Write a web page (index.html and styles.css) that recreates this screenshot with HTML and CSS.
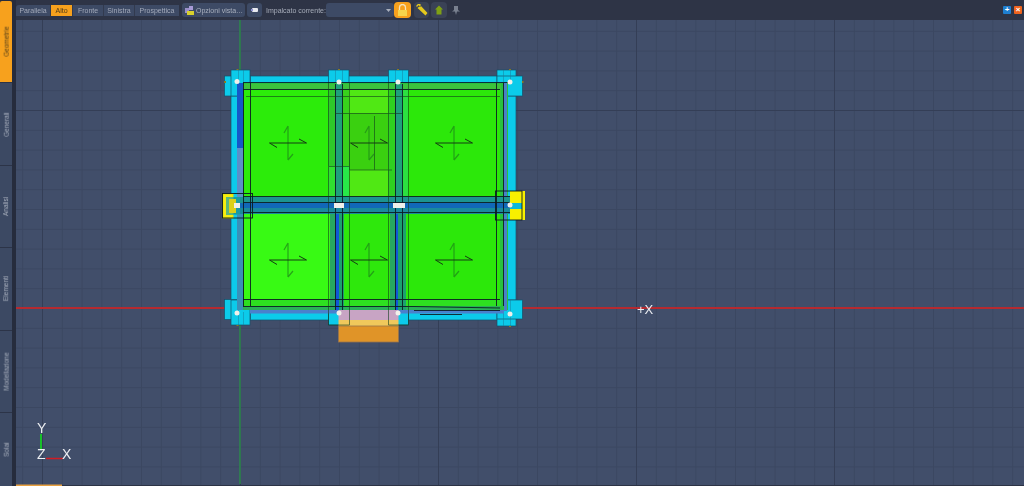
FILE: index.html
```html
<!DOCTYPE html>
<html lang="it">
<head>
<meta charset="utf-8">
<title>Vista Alto</title>
<link rel="stylesheet" href="styles.css">
</head>
<body>
<div class="app">
  <aside class="side">
    <div class="stab on"><span>Geometrie</span></div>
    <div class="stab"><span>Generali</span></div>
    <div class="stab"><span>Analisi</span></div>
    <div class="stab"><span>Elementi</span></div>
    <div class="stab"><span>Modellazione</span></div>
    <div class="stab last"><span>Solai</span></div>
  </aside>
  <main class="work">
    <header class="bar">
      <nav class="views">
        <span class="vt w1">Parallela</span><span class="vt w2 on">Alto</span><span class="vt w3">Fronte</span><span class="vt w4">Sinistra</span><span class="vt w5">Prospettica</span>
      </nav>
      <button class="btn opts">
        <svg width="11" height="11" viewBox="0 0 11 11"><rect x="1" y="3" width="4" height="5" fill="#9a8fc8"/><rect x="5" y="1" width="4" height="4" fill="#a79ad6"/><rect x="3" y="6" width="7" height="4" fill="#d8d02c"/></svg>
        <span class="soft">Opzioni vista…</span>
      </button>
      <button class="btn cam">
        <svg width="8" height="8" viewBox="0 0 8 8"><rect x="1" y="2" width="6" height="4" rx="1" fill="#e8eaf0"/><rect x="0" y="3" width="2" height="2" fill="#8f8fd0"/></svg>
      </button>
      <label class="lbl">Impalcato corrente:</label>
      <div class="combo"><svg width="5" height="3" viewBox="0 0 5 3"><path d="M0 0h5L2.500 3z" fill="#aab0bd"/></svg></div>
      <button class="ib lock">
        <svg width="11" height="13" viewBox="0 0 11 13"><path d="M2.500 6V3.500a3 3 0 0 1 6 0V6" fill="none" stroke="#f4e4c0" stroke-width="1.300"/><rect x="1" y="6" width="9" height="6" fill="#f6d44c"/></svg>
      </button>
      <button class="ib wrench">
        <svg width="12" height="12" viewBox="0 0 12 12"><path d="M.8 3 3 1l.6 2 1-.2.2-2.300C3.500-.5 1.500-.3.800 1 .2 1.800.2 2.500.8 3zM1.500 4 4.500 1.500 11.500 9 9.500 11.500z" fill="#e4c81c"/></svg>
      </button>
      <button class="ib home">
        <svg width="10" height="10" viewBox="0 0 10 10"><path d="M5 .5 9 4.500H7.500V9.500H2.500V4.500H1z" fill="#7fa014"/></svg>
      </button>
      <span class="pin">
        <svg width="8" height="9" viewBox="0 0 8 9"><path d="M2 0h4v4l2 1.500H5L4 9 3 5.500H0L2 4z" fill="#79808f"/></svg>
      </span>
      <div class="win">
        <span class="wb plus">+</span><span class="wb close">×</span>
      </div>
    </header>
    <section class="canvas">
      <svg class="scene" viewBox="16 20 1008 466" width="1008" height="466">
        <defs>
          <pattern id="minor" x="42" y="110" width="19.8" height="19.8" patternUnits="userSpaceOnUse">
            <path d="M.5 0V19.800M0 .5H19.800" fill="none" stroke="#3b4761" stroke-width="1"/>
          </pattern>
          <g id="arrow">
            <path d="M0-17V17M0-17-4-10M0 17 5 11" fill="none" stroke="#1f8a1a" stroke-width="1.200" opacity=".75"/>
            <path d="M-18.500 0H18.500M-18.500 0-11 4.500M18.500 0 11-4" fill="none" stroke="#143c12" stroke-width="1"/>
          </g>
        </defs>
        <rect x="16" y="20" width="1008" height="466" fill="url(#minor)"/>
        <path d="M42.500 20V486M240.500 20V486M438.500 20V486M636.500 20V486M834.500 20V486M16 110.500H1024" fill="none" stroke="#343e56" stroke-width="1"/>
        <path d="M240 20V484" stroke="#2c8a4e" stroke-width="1.500"/>
        <path d="M16 308H1024" stroke="#b52a30" stroke-width="2"/>
        <rect x="16" y="485" width="1008" height="1" fill="#2c3345"/>

        <!-- cyan frame -->
        <g fill="#0ccbea" stroke="#14506a" stroke-width=".7">
          <rect x="231" y="76" width="285" height="244"/>
          <rect x="224.500" y="76" width="26" height="20"/>
          <rect x="231" y="70" width="19" height="26"/>
          <rect x="328.500" y="70" width="20.500" height="13"/>
          <rect x="388.500" y="70" width="20" height="13"/>
          <rect x="497" y="70" width="19" height="26"/>
          <rect x="497" y="76" width="25.500" height="20"/>
          <rect x="224.500" y="299.500" width="26" height="20"/>
          <rect x="231" y="300" width="19" height="25"/>
          <rect x="328.500" y="312" width="20" height="13"/>
          <rect x="388.500" y="312" width="20" height="13"/>
          <rect x="497" y="300" width="19" height="26"/>
          <rect x="497" y="300" width="25.500" height="19"/>
        </g>
        <g fill="none" stroke="#1a7a9a" stroke-width=".6" opacity=".8">
          <path d="M238.500 70V96M243.500 70V83M335.500 70V83M342.500 70V83M395.500 70V83M402.500 70V83M503.500 70V83M510.500 70V83"/>
          <path d="M238.500 300V325M243.500 312V325M503.500 300V326M510.500 300V326"/>
        </g>

        <!-- floor field -->
        <rect x="238" y="83" width="270" height="227" fill="#28c040"/>
        <rect x="237" y="83" width="6" height="65" fill="#1558c8"/>
        <rect x="237" y="148" width="6" height="50" fill="#5c90c8"/>
        <rect x="237" y="214" width="6" height="96" fill="#3a90b8"/>
        <rect x="504" y="83" width="3" height="228" fill="#4a80c8"/>
        <rect x="243" y="84" width="258" height="13" fill="#3cc23c"/>
        <rect x="243" y="299" width="258" height="7" fill="#2ee020"/>
        <rect x="243" y="306" width="258" height="4" fill="#2ab058"/>

        <!-- slabs -->
        <rect x="244" y="90" width="84" height="108" fill="#2cec0a"/>
        <rect x="349" y="90" width="45" height="108" fill="#50e814"/>
        <rect x="349" y="113" width="43" height="57" fill="#3ad010"/>
        <rect x="408" y="90" width="92" height="108" fill="#2ce80a"/>
        <rect x="244" y="214" width="86" height="85" fill="#38fa14"/>
        <rect x="344" y="214" width="46" height="85" fill="#2ee80c"/>
        <rect x="406" y="214" width="94" height="85" fill="#2ce80a"/>

        <!-- vertical beams, upper half -->
        <rect x="328" y="90" width="7" height="76" fill="#2ec82a"/>
        <rect x="342" y="90" width="7" height="76" fill="#38d21c"/>
        <rect x="328" y="166" width="7" height="31" fill="#30e030"/>
        <rect x="342" y="166" width="7" height="31" fill="#28e848"/>
        <rect x="335" y="84" width="7" height="113" fill="#1fa07c"/>
        <rect x="388" y="90" width="7" height="107" fill="#2fd020"/>
        <rect x="402" y="90" width="6" height="107" fill="#2ce040"/>
        <rect x="395" y="84" width="7" height="113" fill="#1fa07c"/>

        <!-- vertical beams, lower half -->
        <rect x="330" y="213" width="5" height="97" fill="#27a860"/>
        <rect x="335" y="213" width="4" height="97" fill="#1058d8"/>
        <rect x="339" y="213" width="5" height="97" fill="#1ca070"/>
        <rect x="390" y="213" width="5" height="97" fill="#27a860"/>
        <rect x="395" y="213" width="3" height="97" fill="#1058d8"/>
        <rect x="398" y="213" width="8" height="97" fill="#1ca070"/>

        <!-- centre beam -->
        <rect x="231" y="197" width="279" height="6" fill="#1c9490"/>
        <rect x="231" y="203" width="279" height="5" fill="#1168b8"/>
        <rect x="231" y="208" width="279" height="6" fill="#1a8a9c"/>

        <!-- lower band -->
        <rect x="250" y="310" width="254" height="3.500" fill="#4a80cc"/>
        <rect x="338.500" y="310" width="60" height="10" fill="#c8a4c4"/>
        <rect x="338.500" y="320" width="60" height="6" fill="#f0c85c"/>
        <rect x="338.500" y="326" width="60" height="16" fill="#e09428" stroke="#98744c" stroke-width=".8"/>

        <!-- yellow ends -->
        <rect x="223" y="194" width="10" height="24" fill="#f6ee10" stroke="#e8e000"/>
        <rect x="226" y="197" width="14" height="18" fill="#1aa0a8" opacity=".7"/>
        <rect x="229" y="199" width="7" height="14" fill="#dcd018"/>
        <rect x="510" y="191" width="15" height="29" fill="#f8f000"/>
        <rect x="510" y="203" width="12" height="6" fill="#10b8d8"/>

        <!-- outline drawing: strong edges -->
        <g fill="none" stroke="#0c1c22" stroke-width=".9">
          <path d="M243 82.500H510M243 89.500H500"/>
          <path d="M243 196.500H510M243 202.500H510M243 212.500H510"/>
          <path d="M243 299.500H500M243 306.500H414L500 308M414 310.500H500M420 314.500H462"/>
          <path d="M243.500 83V306M250.500 83V306"/>
          <path d="M335.500 84V310M342.500 84V310"/>
          <path d="M395.500 84V310M402.500 84V310"/>
          <path d="M496.500 83V306M503.500 83V306"/>
          <rect x="222.500" y="193.500" width="30" height="24.500"/>
          <rect x="495.500" y="191" width="26.500" height="29"/>
        </g>
        <!-- outline drawing: faint edges -->
        <g fill="none" stroke="#123c1c" stroke-width=".8" opacity=".75">
          <path d="M246 96.500H500"/>
          <path d="M328.500 83V312M349.500 83V312M388.500 83V312M408.500 83V312"/>
          <path d="M329 166.500H349M335 113.500H402M349.500 113V170H392M374.500 116V170"/>
          <path d="M328.500 312V325H349.500V312M388.500 312V325H408.500V312"/>
        </g>

        <!-- nodes -->
        <g fill="#f0f0ea">
          <circle cx="237" cy="81.500" r="2.500"/><circle cx="339" cy="82" r="2.500"/><circle cx="398" cy="82" r="2.500"/><circle cx="510" cy="82" r="2.500"/>
          <rect x="234" y="203" width="6" height="5"/><rect x="334" y="203" width="10" height="5"/><rect x="393" y="203" width="12" height="5"/><circle cx="510" cy="205" r="2.500"/>
          <circle cx="237" cy="313" r="2.500"/><circle cx="339" cy="313" r="2.500"/><circle cx="398" cy="313" r="2.500"/><circle cx="510" cy="314" r="2.500"/>
        </g>
        <g fill="#8a7a20">
          <rect x="236.500" y="69" width="2" height="1"/><rect x="338" y="69" width="2" height="1"/><rect x="397" y="69" width="2" height="1"/><rect x="509" y="69" width="2" height="1"/>
          <rect x="224" y="81" width="2" height="2"/><rect x="522" y="81" width="1.500" height="2"/><rect x="236.500" y="325" width="2" height="1"/><rect x="509" y="326" width="2" height="1"/>
        </g>

        <!-- slab direction marks -->
        <use href="#arrow" x="288" y="143"/>
        <use href="#arrow" x="369" y="143"/>
        <use href="#arrow" x="454" y="143"/>
        <use href="#arrow" x="288" y="260"/>
        <use href="#arrow" x="369" y="260"/>
        <use href="#arrow" x="454" y="260"/>

        <text class="axis small" x="637" y="314">+X</text>

        <!-- triad -->
        <path d="M41 434V449" stroke="#18c02a" stroke-width="2"/>
        <path d="M46 458.500H63" stroke="#d01c24" stroke-width="1.500"/>
        <text class="axis" x="37" y="433">Y</text>
        <text class="axis" x="37" y="459">Z</text>
        <text class="axis" x="62" y="459">X</text>
        <rect x="16" y="484.500" width="46" height="1.500" fill="#e8a040"/>
      </svg>
    </section>
  </main>
</div>
</body>
</html>
```
FILE: styles.css
```css
* { box-sizing: border-box; }
html, body { margin: 0; height: 100%; }
body { background: #2b3142; font-family: "Liberation Sans", Arial, sans-serif; overflow: hidden; }
.app { display: flex; width: 1024px; height: 486px; }

.side { width: 16px; flex: none; display: flex; flex-direction: column; padding: 1px 4px 0 0; background: #262c3d; }
.stab { height: 82.400px; flex: none; display: flex; align-items: center; justify-content: center; background: #3c4963; border-bottom: 1px solid #2c3448; color: #a8afbd; font-size: 6.500px; overflow: hidden; }
.stab.last { flex: 1; border-bottom: 0; }
.stab span { transform: rotate(-90deg); white-space: nowrap; display: block; filter: blur(.3px); }
.stab.on { background: #f7a11d; color: #4c3a1a; border-radius: 2px 2px 0 0; }

.work { flex: 1; display: flex; flex-direction: column; min-width: 0; }
.bar { height: 20px; flex: none; display: flex; align-items: center; background: #2e3446; padding-right: 2px; color: #a6acb9; font-size: 7px; }
.views { display: flex; align-self: flex-start; margin-top: 5px; height: 11px; width: 163px; flex: none; }
.vt { display: flex; align-items: center; justify-content: center; background: #3d4a65; color: #a3aaba; border-right: 1px solid #323a4e; filter: blur(.25px); }
.vt.w1 { width: 35px; border-radius: 3px 0 0 0; }
.vt.w2 { width: 22px; }
.vt.w3 { width: 31px; }
.vt.w4 { width: 31px; }
.vt.w5 { width: 44px; border-right: 0; }
.vt.on { background: #f7a11d; color: #4c3a1a; }

button { border: 0; padding: 0; margin: 0; font: inherit; color: inherit; display: flex; align-items: center; justify-content: center; }
.btn { background: #3d4a65; border-radius: 3px; height: 14px; }
.opts { width: 63px; margin-left: 3px; gap: 1px; color: #a9b0be; white-space: nowrap; overflow: hidden; }
.soft { filter: blur(.25px); }
.cam { width: 15px; margin-left: 2px; }
.lbl { margin-left: 4px; width: 60px; white-space: nowrap; flex: none; filter: blur(.25px); }
.combo { width: 68px; height: 14px; background: #3d4a65; border-radius: 3px; display: flex; align-items: center; justify-content: flex-end; padding-right: 3px; flex: none; }
.ib { width: 16px; height: 16px; border-radius: 4px; background: #3a4256; flex: none; }
.ib.lock { background: #f7a11d; width: 17px; }
.ib.wrench { margin-left: 3px; width: 15px; }
.ib.home { margin-left: 2px; }
.pin { margin-left: 5px; display: flex; }
.win { margin-left: auto; display: flex; gap: 3px; }
.wb { width: 8px; height: 8px; border-radius: 1px; display: flex; align-items: center; justify-content: center; color: #fff; font-size: 8px; font-weight: 700; line-height: 1; }
.plus { background: #1f7fd0; }
.close { background: #f0641e; }

.canvas { flex: 1; background: #414e6a; min-height: 0; position: relative; }
.scene { display: block; }
.axis { font-family: "Liberation Sans", Arial, sans-serif; font-size: 14px; fill: #eceef2; filter: blur(.3px); }
.axis.small { font-size: 13px; }
```
